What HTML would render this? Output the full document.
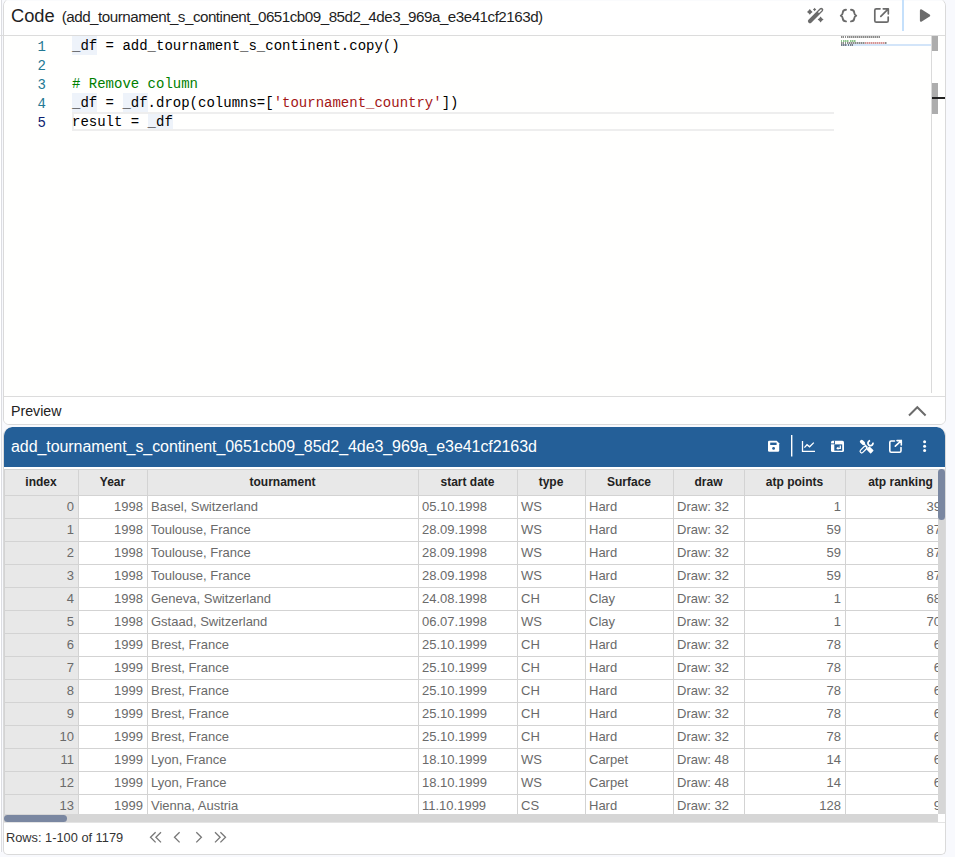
<!DOCTYPE html>
<html><head><meta charset="utf-8">
<style>
*{box-sizing:border-box;margin:0;padding:0}
html,body{width:955px;height:857px;overflow:hidden;background:#f8f9fd;font-family:"Liberation Sans",sans-serif}
.abs{position:absolute}
svg{position:absolute;overflow:visible;left:0;top:0}
#leftwhite{left:0;top:0;width:1px;height:852px;background:#fff}
#outline{left:1px;top:0;width:1px;height:852px;background:#dcdde2}
#hline0{left:0;top:35px;width:3px;height:1px;background:#dcdcdc}
#codecard{left:3px;top:-2px;width:943px;height:427px;background:#fff;border:1px solid #dadada;border-radius:8px 8px 6px 6px;overflow:hidden}
#hdr{left:0;top:0;width:941px;height:37px;border-bottom:1px solid #dcdcdc;background:#fff}
#code-t{left:7px;top:5.5px;font-size:18.3px;color:#1f1f1f;white-space:nowrap;line-height:22px}
#code-t span{font-size:15.2px;letter-spacing:-0.5px;margin-left:7px;position:relative;top:0px}
#editor{left:0;top:37px;width:941px;height:360px;background:#fffffe}
.ln{position:absolute;left:0;width:42px;text-align:right;font-family:"Liberation Mono",monospace;font-size:14px;color:#237893;line-height:19px;padding-top:2px}
.cl{position:absolute;left:68px;font-family:"Liberation Mono",monospace;font-size:14px;color:#000;line-height:19px;white-space:pre;padding-top:1px}
.cm{color:#008000}.st{color:#a31515}
.hl{position:absolute;background:#eef3fa;height:19px;width:25px}
#curline{left:68px;top:76px;width:762px;height:19px;border:2px solid #eeeeee;border-right:none}
#minimap{left:837px;top:0;width:91px;height:20px}
.mm{position:absolute;height:2px;opacity:0.45;background-image:repeating-linear-gradient(90deg,rgba(255,255,255,0) 0 1px,rgba(255,255,255,0.5) 1px 2px)}
#escroll{left:927px;top:0;width:14px;height:357px;border-left:1px solid #dadada}
#prev{left:0;top:397px;width:941px;height:29px;background:#fff;border-top:1px solid #dcdcdc}
#prev-t{left:7px;top:5px;font-size:14.2px;color:#222;line-height:18px}
#datacard{left:3px;top:427px;width:943px;height:428px;background:#fff;border:1px solid #dadada;border-top:none;border-radius:9px 9px 5px 5px;overflow:hidden}
#bluehdr{left:0;top:0;width:941px;height:40px;background:#245f98;border-radius:8px 8px 0 0}
#btitle{left:7px;top:11px;font-size:16px;color:#fff;letter-spacing:-0.07px;white-space:nowrap;line-height:18px}
#tclip{left:0;top:42px;width:934px;height:345px;overflow:hidden}
.trow{position:absolute;left:0;height:24px;width:960px}
.th,.td{position:absolute;top:0;height:100%;border:1px solid #d3d3d3;white-space:nowrap;overflow:hidden;padding:0 4px 0 3px}
.th{background:#e8e8e8;color:#222;font-size:12px;font-weight:bold;text-align:center;line-height:24px}
.td{font-size:13px;color:#6a6a6a;line-height:21px}
.td.r{text-align:right;padding-right:4px}
.td.ix{background:#e8e8e8}
#vtrack{left:934px;top:42px;width:7px;height:345px;background:#d6d6d6}
#vthumb{left:934px;top:42px;width:7px;height:51px;background:#7a87a1;border-radius:4px}
#htrack{left:0;top:387px;width:934px;height:8px;background:#d6d6d6}
#hthumb{left:0;top:388px;width:63px;height:7px;background:#7a87a1;border-radius:4px}
#ftr{left:0;top:395px;width:941px;height:32px;border-top:1px solid #e4e4e4}
#ftr-t{left:2px;top:7px;font-size:12.8px;color:#333;white-space:nowrap;line-height:16px}
</style></head><body>
<div id="leftwhite" class="abs"></div>
<div id="outline" class="abs"></div>
<div id="hline0" class="abs"></div>
<div id="codecard" class="abs">
  <div id="hdr" class="abs">
    <div class="abs" style="left:0;top:0;width:941px;height:2px;background:#fafbfd"></div>
    <div id="code-t" class="abs">Code<span>(add_tournament_s_continent_0651cb09_85d2_4de3_969a_e3e41cf2163d)</span></div>
  </div>
  <div id="editor" class="abs">
    <div class="hl" style="left:68px;top:0"></div>
    <div class="hl" style="left:68px;top:57px"></div>
    <div class="hl" style="left:119px;top:57px"></div>
    <div class="hl" style="left:144px;top:76px"></div>
    <div id="curline" class="abs"></div>
    <div class="ln" style="top:0">1</div>
    <div class="ln" style="top:19px">2</div>
    <div class="ln" style="top:38px">3</div>
    <div class="ln" style="top:57px">4</div>
    <div class="ln" style="top:76px;color:#0b216f">5</div>
    <div class="cl" style="top:0">_df = add_tournament_s_continent.copy()</div>
    <div class="cl" style="top:38px"><span class="cm"># Remove column</span></div>
    <div class="cl" style="top:57px">_df = _df.drop(columns=[<span class="st">'tournament_country'</span>])</div>
    <div class="cl" style="top:76px">result = _df</div>
    <div id="minimap" class="abs">
      <div class="abs" style="left:0;top:8px;width:91px;height:2px;background:#d3e5f9"></div>
<div class="mm" style="left:0px;top:0px;width:3px;background-color:#000"></div>
<div class="mm" style="left:4px;top:0px;width:1px;background-color:#000"></div>
<div class="mm" style="left:6px;top:0px;width:33px;background-color:#000"></div>
<div class="mm" style="left:0px;top:4px;width:1px;background-color:#008000"></div>
<div class="mm" style="left:2px;top:4px;width:6px;background-color:#008000"></div>
<div class="mm" style="left:9px;top:4px;width:6px;background-color:#008000"></div>
<div class="mm" style="left:0px;top:6px;width:3px;background-color:#000"></div>
<div class="mm" style="left:4px;top:6px;width:1px;background-color:#000"></div>
<div class="mm" style="left:6px;top:6px;width:18px;background-color:#000"></div>
<div class="mm" style="left:24px;top:6px;width:20px;background-color:#a31515"></div>
<div class="mm" style="left:44px;top:6px;width:2px;background-color:#000"></div>
<div class="mm" style="left:0px;top:8px;width:6px;background-color:#000"></div>
<div class="mm" style="left:7px;top:8px;width:1px;background-color:#000"></div>
<div class="mm" style="left:9px;top:8px;width:3px;background-color:#000"></div>
    </div>
    <div id="escroll" class="abs">
      <div class="abs" style="left:0;top:0;width:6px;height:15px;background:#adadad"></div>
      <div class="abs" style="left:0;top:47px;width:6px;height:31px;background:#adadad"></div>
      <div class="abs" style="left:0;top:61px;width:13px;height:2px;background:#222"></div>
    </div>
  </div>
  <div id="prev" class="abs"><div id="prev-t" class="abs">Preview</div></div>
</div>
<!-- header icons -->
<svg width="955" height="40" style="width:955px;height:40px">
  <g fill="#6b6b6b">
    <path d="M809.8 9.10 Q810.86 10.84 812.60 11.9 Q810.86 12.96 809.8 14.70 Q808.74 12.96 807.00 11.9 Q808.74 10.84 809.8 9.10 Z"/>
    <path d="M814.6 7.80 Q815.25 8.85 816.30 9.5 Q815.25 10.15 814.6 11.20 Q813.95 10.15 812.90 9.5 Q813.95 8.85 814.6 7.80 Z"/>
    <path d="M820.6 16.60 Q821.74 18.46 823.60 19.6 Q821.74 20.74 820.6 22.60 Q819.46 20.74 817.60 19.6 Q819.46 18.46 820.6 16.60 Z"/>
    <rect x="-10" y="-2" width="20" height="4" rx="1.9" transform="translate(815.6 15.5) rotate(-45)"/>
  </g>
  <rect x="-2.2" y="-0.7" width="4.4" height="1.4" rx="0.5" transform="translate(820 11.1) rotate(-45)" fill="#fff"/>
  <g stroke="#6b6b6b" fill="none" stroke-width="1.7" stroke-linecap="round" stroke-linejoin="round">
    <path d="M846 9.8 Q843 9.8 842.8 12.5 Q842.6 15 840.8 15.6 Q842.6 16.2 842.8 18.7 Q843 21.4 846 21.4" stroke-width="1.9"/>
    <path d="M851 9.8 Q854 9.8 854.2 12.5 Q854.4 15 856.2 15.6 Q854.4 16.2 854.2 18.7 Q854 21.4 851 21.4" stroke-width="1.9"/>
    <path d="M880 8.8 L876.3 8.8 Q874.8 8.8 874.8 10.3 L874.8 20.7 Q874.8 22.2 876.3 22.2 L886.7 22.2 Q888.2 22.2 888.2 20.7 L888.2 17"/>
    <path d="M880.8 16.3 L888.3 8.8 M883.3 8.8 L888.3 8.8 L888.3 13.8"/>
  </g>
  <rect x="902" y="0" width="2" height="31" fill="#c5e0fb"/>
  <path d="M921.1 10.4 L929 15.5 L921.1 20.6 Z" fill="#6b6b6b" stroke="#6b6b6b" stroke-width="2.4" stroke-linejoin="round"/>
  <path d="M909 415.5 L917.3 407.2 L925.6 415.5" stroke="#6b6b6b" stroke-width="2" fill="none" transform="translate(0,0)"/>
</svg>
<div id="datacard" class="abs">
  <div id="bluehdr" class="abs">
    <div id="btitle" class="abs">add_tournament_s_continent_0651cb09_85d2_4de3_969a_e3e41cf2163d</div>
  </div>
  <div id="tclip" class="abs">
<div class="trow" style="top:0;height:27px"><div class="th" style="left:0px;width:75px">index</div><div class="th" style="left:74px;width:70px">Year</div><div class="th" style="left:143px;width:272px">tournament</div><div class="th" style="left:414px;width:100px">start date</div><div class="th" style="left:513px;width:69px">type</div><div class="th" style="left:581px;width:89px">Surface</div><div class="th" style="left:669px;width:72px">draw</div><div class="th" style="left:740px;width:102px">atp points</div><div class="th" style="left:841px;width:102px;padding-left:13px">atp ranking</div></div>
<div class="trow" style="top:26px"><div class="td ix r" style="left:0px;width:75px">0</div><div class="td r" style="left:74px;width:70px">1998</div><div class="td" style="left:143px;width:272px">Basel, Switzerland</div><div class="td" style="left:414px;width:100px">05.10.1998</div><div class="td" style="left:513px;width:69px">WS</div><div class="td" style="left:581px;width:89px">Hard</div><div class="td" style="left:669px;width:72px">Draw: 32</div><div class="td r" style="left:740px;width:102px">1</div><div class="td r" style="left:841px;width:102px;padding-right:5px">39</div></div>
<div class="trow" style="top:49px"><div class="td ix r" style="left:0px;width:75px">1</div><div class="td r" style="left:74px;width:70px">1998</div><div class="td" style="left:143px;width:272px">Toulouse, France</div><div class="td" style="left:414px;width:100px">28.09.1998</div><div class="td" style="left:513px;width:69px">WS</div><div class="td" style="left:581px;width:89px">Hard</div><div class="td" style="left:669px;width:72px">Draw: 32</div><div class="td r" style="left:740px;width:102px">59</div><div class="td r" style="left:841px;width:102px;padding-right:5px">87</div></div>
<div class="trow" style="top:72px"><div class="td ix r" style="left:0px;width:75px">2</div><div class="td r" style="left:74px;width:70px">1998</div><div class="td" style="left:143px;width:272px">Toulouse, France</div><div class="td" style="left:414px;width:100px">28.09.1998</div><div class="td" style="left:513px;width:69px">WS</div><div class="td" style="left:581px;width:89px">Hard</div><div class="td" style="left:669px;width:72px">Draw: 32</div><div class="td r" style="left:740px;width:102px">59</div><div class="td r" style="left:841px;width:102px;padding-right:5px">87</div></div>
<div class="trow" style="top:95px"><div class="td ix r" style="left:0px;width:75px">3</div><div class="td r" style="left:74px;width:70px">1998</div><div class="td" style="left:143px;width:272px">Toulouse, France</div><div class="td" style="left:414px;width:100px">28.09.1998</div><div class="td" style="left:513px;width:69px">WS</div><div class="td" style="left:581px;width:89px">Hard</div><div class="td" style="left:669px;width:72px">Draw: 32</div><div class="td r" style="left:740px;width:102px">59</div><div class="td r" style="left:841px;width:102px;padding-right:5px">87</div></div>
<div class="trow" style="top:118px"><div class="td ix r" style="left:0px;width:75px">4</div><div class="td r" style="left:74px;width:70px">1998</div><div class="td" style="left:143px;width:272px">Geneva, Switzerland</div><div class="td" style="left:414px;width:100px">24.08.1998</div><div class="td" style="left:513px;width:69px">CH</div><div class="td" style="left:581px;width:89px">Clay</div><div class="td" style="left:669px;width:72px">Draw: 32</div><div class="td r" style="left:740px;width:102px">1</div><div class="td r" style="left:841px;width:102px;padding-right:5px">68</div></div>
<div class="trow" style="top:141px"><div class="td ix r" style="left:0px;width:75px">5</div><div class="td r" style="left:74px;width:70px">1998</div><div class="td" style="left:143px;width:272px">Gstaad, Switzerland</div><div class="td" style="left:414px;width:100px">06.07.1998</div><div class="td" style="left:513px;width:69px">WS</div><div class="td" style="left:581px;width:89px">Clay</div><div class="td" style="left:669px;width:72px">Draw: 32</div><div class="td r" style="left:740px;width:102px">1</div><div class="td r" style="left:841px;width:102px;padding-right:5px">70</div></div>
<div class="trow" style="top:164px"><div class="td ix r" style="left:0px;width:75px">6</div><div class="td r" style="left:74px;width:70px">1999</div><div class="td" style="left:143px;width:272px">Brest, France</div><div class="td" style="left:414px;width:100px">25.10.1999</div><div class="td" style="left:513px;width:69px">CH</div><div class="td" style="left:581px;width:89px">Hard</div><div class="td" style="left:669px;width:72px">Draw: 32</div><div class="td r" style="left:740px;width:102px">78</div><div class="td r" style="left:841px;width:102px;padding-right:5px">6</div></div>
<div class="trow" style="top:187px"><div class="td ix r" style="left:0px;width:75px">7</div><div class="td r" style="left:74px;width:70px">1999</div><div class="td" style="left:143px;width:272px">Brest, France</div><div class="td" style="left:414px;width:100px">25.10.1999</div><div class="td" style="left:513px;width:69px">CH</div><div class="td" style="left:581px;width:89px">Hard</div><div class="td" style="left:669px;width:72px">Draw: 32</div><div class="td r" style="left:740px;width:102px">78</div><div class="td r" style="left:841px;width:102px;padding-right:5px">6</div></div>
<div class="trow" style="top:210px"><div class="td ix r" style="left:0px;width:75px">8</div><div class="td r" style="left:74px;width:70px">1999</div><div class="td" style="left:143px;width:272px">Brest, France</div><div class="td" style="left:414px;width:100px">25.10.1999</div><div class="td" style="left:513px;width:69px">CH</div><div class="td" style="left:581px;width:89px">Hard</div><div class="td" style="left:669px;width:72px">Draw: 32</div><div class="td r" style="left:740px;width:102px">78</div><div class="td r" style="left:841px;width:102px;padding-right:5px">6</div></div>
<div class="trow" style="top:233px"><div class="td ix r" style="left:0px;width:75px">9</div><div class="td r" style="left:74px;width:70px">1999</div><div class="td" style="left:143px;width:272px">Brest, France</div><div class="td" style="left:414px;width:100px">25.10.1999</div><div class="td" style="left:513px;width:69px">CH</div><div class="td" style="left:581px;width:89px">Hard</div><div class="td" style="left:669px;width:72px">Draw: 32</div><div class="td r" style="left:740px;width:102px">78</div><div class="td r" style="left:841px;width:102px;padding-right:5px">6</div></div>
<div class="trow" style="top:256px"><div class="td ix r" style="left:0px;width:75px">10</div><div class="td r" style="left:74px;width:70px">1999</div><div class="td" style="left:143px;width:272px">Brest, France</div><div class="td" style="left:414px;width:100px">25.10.1999</div><div class="td" style="left:513px;width:69px">CH</div><div class="td" style="left:581px;width:89px">Hard</div><div class="td" style="left:669px;width:72px">Draw: 32</div><div class="td r" style="left:740px;width:102px">78</div><div class="td r" style="left:841px;width:102px;padding-right:5px">6</div></div>
<div class="trow" style="top:279px"><div class="td ix r" style="left:0px;width:75px">11</div><div class="td r" style="left:74px;width:70px">1999</div><div class="td" style="left:143px;width:272px">Lyon, France</div><div class="td" style="left:414px;width:100px">18.10.1999</div><div class="td" style="left:513px;width:69px">WS</div><div class="td" style="left:581px;width:89px">Carpet</div><div class="td" style="left:669px;width:72px">Draw: 48</div><div class="td r" style="left:740px;width:102px">14</div><div class="td r" style="left:841px;width:102px;padding-right:5px">6</div></div>
<div class="trow" style="top:302px"><div class="td ix r" style="left:0px;width:75px">12</div><div class="td r" style="left:74px;width:70px">1999</div><div class="td" style="left:143px;width:272px">Lyon, France</div><div class="td" style="left:414px;width:100px">18.10.1999</div><div class="td" style="left:513px;width:69px">WS</div><div class="td" style="left:581px;width:89px">Carpet</div><div class="td" style="left:669px;width:72px">Draw: 48</div><div class="td r" style="left:740px;width:102px">14</div><div class="td r" style="left:841px;width:102px;padding-right:5px">6</div></div>
<div class="trow" style="top:325px"><div class="td ix r" style="left:0px;width:75px">13</div><div class="td r" style="left:74px;width:70px">1999</div><div class="td" style="left:143px;width:272px">Vienna, Austria</div><div class="td" style="left:414px;width:100px">11.10.1999</div><div class="td" style="left:513px;width:69px">CS</div><div class="td" style="left:581px;width:89px">Hard</div><div class="td" style="left:669px;width:72px">Draw: 32</div><div class="td r" style="left:740px;width:102px">128</div><div class="td r" style="left:841px;width:102px;padding-right:5px">9</div></div>
  </div>
  <div id="vtrack" class="abs"></div>
  <div id="vthumb" class="abs"></div>
  <div id="htrack" class="abs"></div>
  <div id="hthumb" class="abs"></div>
  <div id="ftr" class="abs"><div id="ftr-t" class="abs">Rows: 1-100 of 1179</div></div>
</div>
<!-- blue header icons + footer pager -->
<svg width="955" height="857" style="width:955px;height:857px">
  <g fill="#fff">
    <path d="M768 442 Q768 440.7 769.3 440.7 L776.7 440.7 L779.2 443.2 L779.2 450.5 Q779.2 451.8 777.9 451.8 L769.3 451.8 Q768 451.8 768 450.5 Z"/>
  </g>
  <rect x="770.2" y="442.6" width="6.4" height="2.4" fill="#245f98"/>
  <circle cx="773.6" cy="448.4" r="1.4" fill="#245f98"/>
  <rect x="791" y="435" width="1.4" height="21.5" fill="#fff"/>
  <g stroke="#fff" fill="none" stroke-width="1.3">
    <path d="M802.5 441 L802.5 451.3 L815 451.3"/>
    <path d="M804.4 447.6 L807 444.7 L809.6 446.8 L813.8 442.6"/>
  </g>
  <rect x="831" y="440.7" width="13" height="11.3" rx="1.6" fill="#fff"/>
  <g fill="#245f98">
    <rect x="834" y="440.7" width="0.9" height="3.4"/>
    <rect x="831" y="443.4" width="3.9" height="0.9"/>
    <rect x="834.3" y="444.4" width="7.9" height="6.3"/>
  </g>
  <path d="M840.3 445.6 L840.3 448.3 L837.8 448.3" stroke="#fff" fill="none" stroke-width="1.3"/>
  <path d="M836.2 448.3 L838.4 446.5 L838.4 450.1 Z" fill="#fff"/>
  <g fill="#fff">
    <rect x="-2.9" y="-1.8" width="5.8" height="3.6" rx="1.6" transform="translate(862.5 442.4) rotate(45)"/>
    <rect x="-3.1" y="-2.2" width="6.2" height="4.4" rx="0.7" transform="translate(870 449.9) rotate(45)"/>
  </g>
  <line x1="864" y1="443.9" x2="867.6" y2="447.5" stroke="#fff" stroke-width="1.3"/>
  <rect x="-4" y="-1.6" width="8" height="3.2" rx="1.6" transform="translate(863.4 449.6) rotate(-45)" fill="none" stroke="#fff" stroke-width="1.2"/>
  <path d="M872.9 442.6 A2.5 2.5 0 1 1 870.1 440.7" stroke="#fff" stroke-width="1.8" fill="none"/>
  <g stroke="#fff" fill="none" stroke-width="1.6" stroke-linecap="round" stroke-linejoin="round">
    <path d="M894.5 441 L891.2 441 Q889.8 441 889.8 442.4 L889.8 450.8 Q889.8 452.2 891.2 452.2 L899.6 452.2 Q901 452.2 901 450.8 L901 447.6"/>
    <path d="M895.3 446.2 L901.3 440.6 M897 440.6 L901.3 440.6 L901.3 444.9"/>
  </g>
  <g fill="#fff">
    <circle cx="924.6" cy="441.8" r="1.5"/>
    <circle cx="924.6" cy="446.2" r="1.5"/>
    <circle cx="924.6" cy="450.6" r="1.5"/>
  </g>
  <g stroke="#777" fill="none" stroke-width="1.3">
    <path d="M155.6 832.3 L150.5 837.3 L155.6 842.4 M161 832.3 L155.9 837.3 L161 842.4"/>
    <path d="M179.6 832.3 L174.5 837.3 L179.6 842.4"/>
    <path d="M196.3 832.3 L201.4 837.3 L196.3 842.4"/>
    <path d="M215 832.3 L220.1 837.3 L215 842.4 M220.4 832.3 L225.5 837.3 L220.4 842.4"/>
  </g>
</svg>
</body></html>
